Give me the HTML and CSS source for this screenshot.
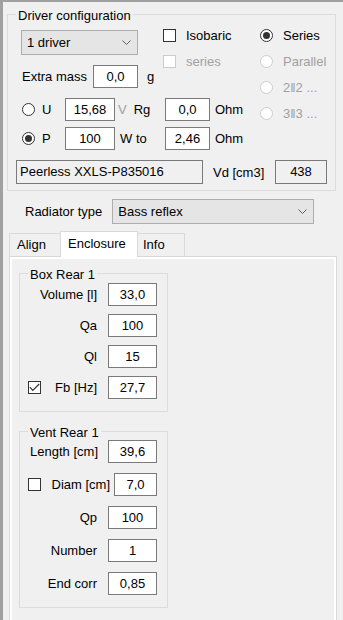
FILE: index.html
```html
<!DOCTYPE html>
<html lang="en">
<head>
    <meta charset="UTF-8">
    <meta name="viewport" content="width=device-width, initial-scale=1.0">
    <title>Driver configuration</title>
    <link rel="stylesheet" href="styles.css">
</head>
<body>
<div class="window">

    <fieldset class="group driver">
        <legend>Driver configuration</legend>
        <div class="driver_top">
            <div class="driver_left">
                <div class="driver_head">
                    <div class="col_a">
                        <div class="combo combo_driver">
                            <span>1 driver</span>
                            <svg class="chev" width="9" height="5" viewBox="0 0 9 5"><polyline points="0.5,0.5 4.5,4.5 8.5,0.5"/></svg>
                        </div>
                        <div class="extra">
                            <span>Extra mass</span>
                            <div class="tb tb_mass">0,0</div>
                            <span class="unit_g">g</span>
                        </div>
                    </div>
                    <div class="col_b">
                        <div class="opt"><span class="check"></span>Isobaric</div>
                        <div class="opt off"><span class="check"></span>series</div>
                    </div>
                </div>
                <div class="power">
                    <div class="opt"><span class="radio"></span>U</div>
                    <div class="tb">15,68</div>
                    <div class="mid"><span class="off">V</span><span class="rg">Rg</span></div>
                    <div class="tb">0,0</div>
                    <div class="ohm">Ohm</div>

                    <div class="opt"><span class="radio on"></span>P</div>
                    <div class="tb">100</div>
                    <div class="mid"><span class="wto">W to</span></div>
                    <div class="tb">2,46</div>
                    <div class="ohm">Ohm</div>
                </div>
            </div>
            <div class="driver_right">
                <div class="opt"><span class="radio on"></span>Series</div>
                <div class="opt off"><span class="radio"></span>Parallel</div>
                <div class="opt off"><span class="radio"></span>2‖2 ...</div>
                <div class="opt off"><span class="radio"></span>3‖3 ...</div>
            </div>
        </div>
        <div class="model">
            <div class="tb ro model_name">Peerless XXLS-P835016</div>
            <span class="vd">Vd [cm3]</span>
            <div class="tb ro vd_val">438</div>
        </div>
    </fieldset>

    <div class="radiator">
        <span>Radiator type</span>
        <div class="combo combo_rad">
            <span>Bass reflex</span>
            <svg class="chev" width="9" height="5" viewBox="0 0 9 5"><polyline points="0.5,0.5 4.5,4.5 8.5,0.5"/></svg>
        </div>
    </div>

    <div class="tabs">
        <div class="tab tab_align">Align</div>
        <div class="tab tab_encl active">Enclosure</div>
        <div class="tab tab_info">Info</div>
    </div>
    <div class="tab_frame">
        <div class="tab_page">

            <fieldset class="group box">
                <legend>Box Rear 1</legend>
                <div class="fields">
                    <div class="field"><span class="lbl">Volume [l]</span><div class="tb">33,0</div></div>
                    <div class="field"><span class="lbl">Qa</span><div class="tb">100</div></div>
                    <div class="field"><span class="lbl">Ql</span><div class="tb">15</div></div>
                    <div class="field">
                        <span class="check on"><svg width="11" height="9" viewBox="0 0 11 9"><polyline points="0.8,4.2 3.8,7.4 10.2,1"/></svg></span>
                        <span class="lbl">Fb [Hz]</span><div class="tb">27,7</div>
                    </div>
                </div>
            </fieldset>

            <fieldset class="group vent">
                <legend>Vent Rear 1</legend>
                <div class="fields">
                    <div class="field"><span class="lbl len">Length [cm]</span><div class="tb">39,6</div></div>
                    <div class="field diam">
                        <span class="check"></span>
                        <span class="lbl">Diam [cm]</span><div class="tb">7,0</div>
                    </div>
                    <div class="field"><span class="lbl">Qp</span><div class="tb">100</div></div>
                    <div class="field"><span class="lbl">Number</span><div class="tb">1</div></div>
                    <div class="field"><span class="lbl">End corr</span><div class="tb">0,85</div></div>
                </div>
            </fieldset>

        </div>
    </div>
</div>
</body>
</html>
```

FILE: styles.css
```css
* {
    box-sizing: border-box;
}
body {
    margin: 0;
    background-color: #f0f0f0;
    font-family: "Liberation Sans", Arial, sans-serif;
    font-size: 13px;
    color: #000;
}
.window {
    height: 620px;
    overflow: hidden;
    border-top: 2px solid #a0a0a0;
    border-left: 3px solid #a0a0a0;
}

/* group boxes */
.group {
    margin: 0;
    padding: 0 8px;
    border: 1px solid #dcdcdc;
    min-width: 0;
}
.group legend {
    padding: 2px 2px 0;
    line-height: 15px;
}
.driver {
    width: 329px;
    margin: 4px 0 0 4px;
    padding: 4px 8px 6px;
}
.driver_top {
    display: flex;
}
.driver_left {
    width: 244px;
}
.driver_head {
    display: flex;
}
.col_a {
    width: 147px;
}
.col_b,
.driver_right {
    display: flex;
    flex-direction: column;
    gap: 10px;
}

/* controls */
.combo {
    display: flex;
    align-items: center;
    justify-content: space-between;
    height: 25px;
    padding: 0 6px 0 5px;
    background-color: #e5e5e5;
    border: 1px solid #adadad;
}
.combo_driver {
    width: 117px;
    margin: 3px 0 0 5px;
}
.chev polyline {
    fill: none;
    stroke: #606060;
    stroke-width: 1;
}
.tb {
    height: 23px;
    line-height: 21px;
    border: 1px solid #7a7a7a;
    background-color: #fff;
    text-align: center;
    white-space: nowrap;
}
.tb.ro {
    height: 24px;
    line-height: 22px;
    background-color: #f0f0f0;
}
.opt {
    display: flex;
    align-items: center;
    height: 16px;
    white-space: nowrap;
}
.check {
    display: flex;
    align-items: center;
    justify-content: center;
    flex: none;
    width: 13px;
    height: 13px;
    margin-right: 10px;
    border: 1px solid #333;
    background-color: #fff;
}
.check polyline {
    fill: none;
    stroke: #333;
    stroke-width: 1.2;
}
.radio {
    display: flex;
    align-items: center;
    justify-content: center;
    flex: none;
    width: 13px;
    height: 13px;
    margin-right: 10px;
    border: 1px solid #333;
    border-radius: 50%;
    background-color: #fff;
}
.radio.on::after {
    content: "";
    width: 7px;
    height: 7px;
    border-radius: 50%;
    background-color: #333;
}
.off {
    color: #a0a0a0;
}
.off .check,
.off .radio {
    border-color: #cccccc;
}

/* driver rows */
.extra {
    display: flex;
    align-items: center;
    margin-top: 10px;
    padding-left: 6px;
}
.tb_mass {
    width: 45px;
    margin-left: 6px;
}
.unit_g {
    margin-left: 9px;
}
.power {
    display: grid;
    grid-template-columns: 49px 50px 50px 45px auto;
    grid-auto-rows: 23px;
    row-gap: 6px;
    align-items: center;
    margin-top: 10px;
}
.power .radio {
    margin: 0 7px 0 6px;
}
.mid {
    padding-left: 3px;
}
.rg {
    margin-left: 7px;
}
.wto {
    margin-left: 2px;
}
.ohm {
    padding-left: 5px;
}
.model {
    display: flex;
    align-items: center;
    margin-top: 10px;
}
.model_name {
    width: 187px;
    padding-left: 3px;
    text-align: left !important;
}
.vd {
    margin-left: 10px;
}
.vd_val {
    width: 52px;
    margin-left: auto;
}

.radiator {
    display: flex;
    align-items: center;
    margin-top: 8px;
    padding-left: 22px;
}
.combo_rad {
    width: 202px;
    margin-left: 10px;
}

/* tabs */
.tabs {
    display: flex;
    align-items: flex-end;
    height: 25px;
    margin: 7px 0 0 6px;
}
.tab {
    height: 23px;
    line-height: 21px;
    padding-left: 7px;
    border: 1px solid #d9d9d9;
    border-bottom: none;
    background-color: #f0f0f0;
}
.tab + .tab {
    margin-left: -1px;
}
.tab_align {
    width: 52px;
}
.tab_encl {
    width: 78px;
}
.tab_info {
    width: 48px;
    padding-left: 5px;
}
.tab.active {
    position: relative;
    z-index: 1;
    height: 26px;
    line-height: 23px;
    margin-bottom: -1px;
    background-color: #fff;
}
.tab_frame {
    width: 328px;
    height: 370px;
    margin-left: 6px;
    padding: 2px;
    border: 1px solid #d9d9d9;
    background-color: #fff;
}
.tab_page {
    height: 100%;
    padding: 6px 0 0 7px;
    background-color: #f0f0f0;
}

/* enclosure boxes */
.box {
    width: 149px;
    padding: 1px 10px 12px 8px;
}
.vent {
    width: 149px;
    margin-top: 11px;
    padding: 0 10px 12px 8px;
}
.fields {
    display: flex;
    flex-direction: column;
    gap: 8px;
}
.vent .fields {
    gap: 10px;
}
.field {
    display: flex;
    align-items: center;
    justify-content: flex-end;
    height: 23px;
}
.field .lbl {
    margin-right: 11px;
    white-space: nowrap;
}
.field .lbl.len {
    margin-right: 10px;
}
.field .tb {
    width: 49px;
}
.field .check {
    margin-right: auto;
}
.diam .lbl {
    margin-right: 4px;
}
.diam .tb {
    width: 43px;
}
```
